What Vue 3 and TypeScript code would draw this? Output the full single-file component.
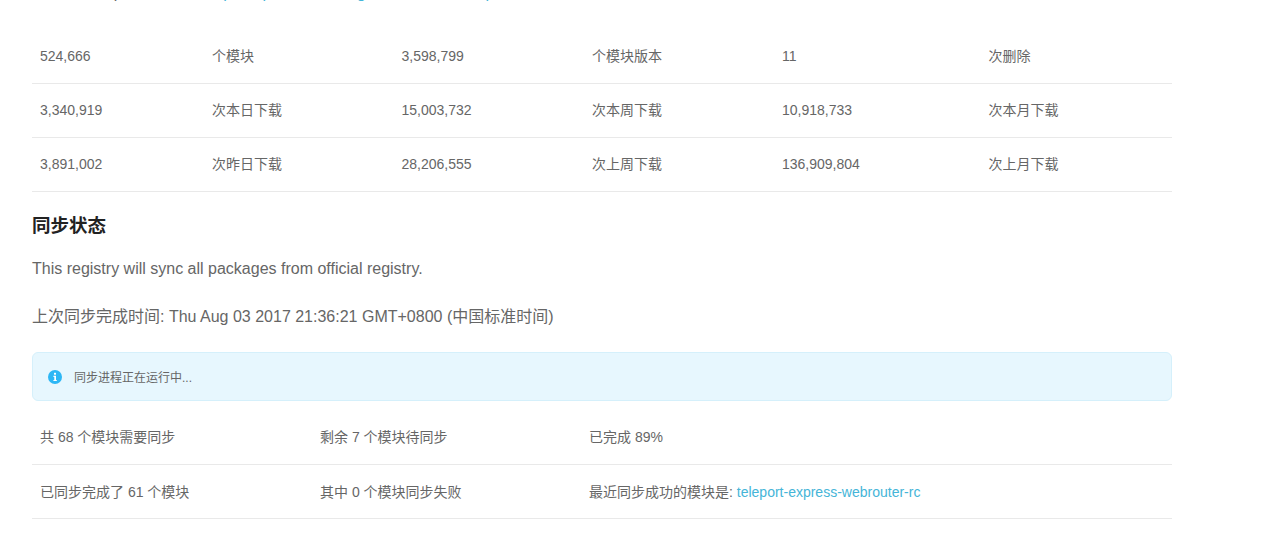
<script setup lang="ts">
type Row = { cells: string[] };

const stats: Row[] = [
  { cells: ["524,666", "个模块", "3,598,799", "个模块版本", "11", "次删除"] },
  { cells: ["3,340,919", "次本日下载", "15,003,732", "次本周下载", "10,918,733", "次本月下载"] },
  { cells: ["3,891,002", "次昨日下载", "28,206,555", "次上周下载", "136,909,804", "次上月下载"] },
];
</script>

<template>
  <div class="page">
    <p class="cut">
      This is an npm mirror of
      <a class="link">https://npm.taobao.org/mirrors/electron/patch</a>
    </p>

    <table class="table table--stats">
      <tbody>
        <tr v-for="(row, i) in stats" :key="i">
          <td v-for="cell in row.cells" :key="cell">{{ cell }}</td>
        </tr>
      </tbody>
    </table>

    <h2 class="title">同步状态</h2>
    <p class="para para--first">This registry will sync all packages from official registry.</p>
    <p class="para">上次同步完成时间: Thu Aug 03 2017 21:36:21 GMT+0800 (中国标准时间)</p>

    <div class="alert">
      <svg class="alert__icon" viewBox="0 0 14 14" aria-hidden="true">
        <circle cx="7" cy="7" r="7" fill="#2db7f5" />
        <rect x="6" y="2.8" width="2" height="1.9" fill="#fff" />
        <path d="M5.4 5.8H8v4.1h.8v1.1H5.4V9.9h.9V6.9h-.9z" fill="#fff" />
      </svg>
      <span>同步进程正在运行中...</span>
    </div>

    <table class="table table--sync">
      <tbody>
        <tr>
          <td>共 68 个模块需要同步</td>
          <td>剩余 7 个模块待同步</td>
          <td>已完成 89%</td>
        </tr>
        <tr>
          <td>已同步完成了 61 个模块</td>
          <td>其中 0 个模块同步失败</td>
          <td>最近同步成功的模块是: <a class="link">teleport-express-webrouter-rc</a></td>
        </tr>
      </tbody>
    </table>
  </div>
</template>

<style>
html,
body {
  margin: 0;
  background: #fff;
  overflow: hidden;
}
</style>

<style scoped>
.page {
  height: 534px;
  overflow: hidden;
  box-sizing: border-box;
  padding: 0 106px 0 32px;
  font-family: "Liberation Sans", "Noto Sans CJK SC", sans-serif;
  color: #666;
  font-size: 14px;
}

.cut {
  margin: -19px 0 24px;
  height: 24px;
  line-height: 24px;
  font-size: 16px;
  white-space: nowrap;
}

.cut .link {
  margin-left: 1px;
}

.link {
  color: #45b5d8;
}

.table {
  width: 1140px;
  border-collapse: collapse;
  table-layout: fixed;
}

.table td {
  box-sizing: border-box;
  height: 54px;
  padding: 0 8px;
  border-bottom: 1px solid #e9e9e9;
  line-height: 20px;
}

.table--stats td:nth-child(1) { width: 172px; }
.table--stats td:nth-child(2) { width: 189.5px; }
.table--stats td:nth-child(3) { width: 190.5px; }
.table--stats td:nth-child(4) { width: 190px; }
.table--stats td:nth-child(5) { width: 206.5px; }

.table--sync td:nth-child(1) { width: 280px; }
.table--sync td:nth-child(2) { width: 269px; }

.title {
  margin: 21px 0 0;
  font-size: 18.5px;
  line-height: 26px;
  color: #222;
  font-weight: 700;
}

.para {
  margin: 24px 0 0;
  font-size: 16px;
  line-height: 24px;
}

.para--first {
  margin-top: 18px;
}

.alert {
  display: flex;
  align-items: center;
  gap: 12px;
  height: 49px;
  box-sizing: border-box;
  margin-top: 23px;
  padding: 0 15px;
  width: 1140px;
  background: #e7f7fe;
  border: 1px solid #d5f0fb;
  border-radius: 6px;
  font-size: 12px;
}

.alert__icon {
  width: 14px;
  height: 14px;
  flex-shrink: 0;
  margin-top: 2px;
}

.table--sync {
  margin-top: 10px;
}
</style>
